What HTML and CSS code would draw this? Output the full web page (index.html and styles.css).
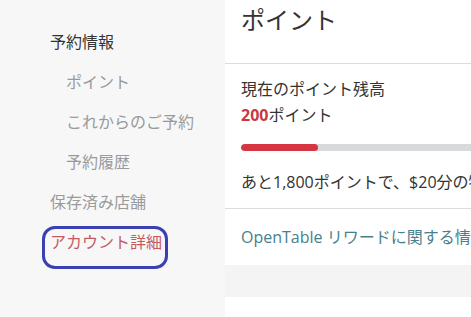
FILE: index.html
```html
<!DOCTYPE html>
<html lang="ja">
<head>
<meta charset="utf-8">
<title>ポイント</title>
<link rel="stylesheet" href="styles.css">
</head>
<body>
<div class="page">
  <nav class="sidebar">
    <ul class="nav">
      <li class="nav-item nav-head">予約情報</li>
      <li class="nav-item nav-sub">ポイント</li>
      <li class="nav-item nav-sub">これからのご予約</li>
      <li class="nav-item nav-sub">予約履歴</li>
      <li class="nav-item nav-muted">保存済み店舗</li>
      <li class="nav-item nav-active">アカウント詳細<span class="annotation"></span></li>
    </ul>
  </nav>
  <main class="main">
    <section class="card">
      <header class="card-header">
        <h1 class="title">ポイント</h1>
      </header>
      <div class="card-body">
        <p class="line">現在のポイント残高</p>
        <p class="line"><strong class="points">200</strong>ポイント</p>
        <div class="bar"><div class="bar-fill" style="width:10%"></div></div>
        <p class="line line-next">あと1,800ポイントで、$20分の特典と交換できます。</p>
      </div>
      <div class="card-footer">
        <a class="link" href="#">OpenTable リワードに関する情報</a>
      </div>
    </section>
    <section class="card card-next"></section>
  </main>
</div>
</body>
</html>
```

FILE: styles.css
```css
html, body {
  margin: 0;
  padding: 0;
  height: 100%;
  overflow: hidden;
}
body {
  font-family: "Open Sans", "Noto Sans CJK JP", sans-serif;
  font-size: 16px;
  color: #333;
  background: #f4f4f5;
}
.page {
  display: flex;
  width: 1100px;
  height: 317px;
}
.sidebar {
  width: 225px;
  flex: none;
  background: #f7f7f8;
}
.nav {
  list-style: none;
  margin: 0;
  padding: 22px 0 0 0;
}
.nav-item {
  position: relative;
  line-height: 40px;
  height: 40px;
  padding-left: 50px;
  white-space: nowrap;
}
.nav-head { color: #333; }
.nav-sub { color: #9a9a9a; padding-left: 66px; }
.nav-muted { color: #9a9a9a; }
.nav-active { color: #c45a5f; }
.annotation {
  position: absolute;
  left: 42px;
  top: 4px;
  width: 120px;
  height: 37px;
  border: 3.5px solid #3a3fb2;
  border-radius: 13px;
}
.main {
  flex: none;
  width: 802px;
  display: flex;
  flex-direction: column;
  gap: 32px;
}
.card {
  background: #fff;
}
.card-header {
  height: 63px;
  padding-left: 16px;
  border-bottom: 1px solid #dcdcdc;
}
.title {
  margin: 0;
  font-size: 24px;
  font-weight: normal;
  line-height: 40px;
  color: #333;
}
.card-body {
  padding: 12px 16px 13px;
  border-bottom: 1px solid #dcdcdc;
}
.line {
  margin: 0;
  line-height: 26px;
  white-space: nowrap;
}
.points {
  color: #c9393f;
  font-weight: 700;
}
.bar {
  margin-top: 16px;
  height: 7px;
  border-radius: 4px;
  background: #d8d9db;
  overflow: hidden;
}
.bar-fill {
  height: 100%;
  background: #d63642;
  border-radius: 4px;
}
.line-next {
  margin-top: 18px;
}
.card-footer {
  padding: 15px 16px;
  line-height: 26px;
}
.link {
  color: #47808d;
  text-decoration: none;
  white-space: nowrap;
}
.card-next {
  height: 100px;
}
```
